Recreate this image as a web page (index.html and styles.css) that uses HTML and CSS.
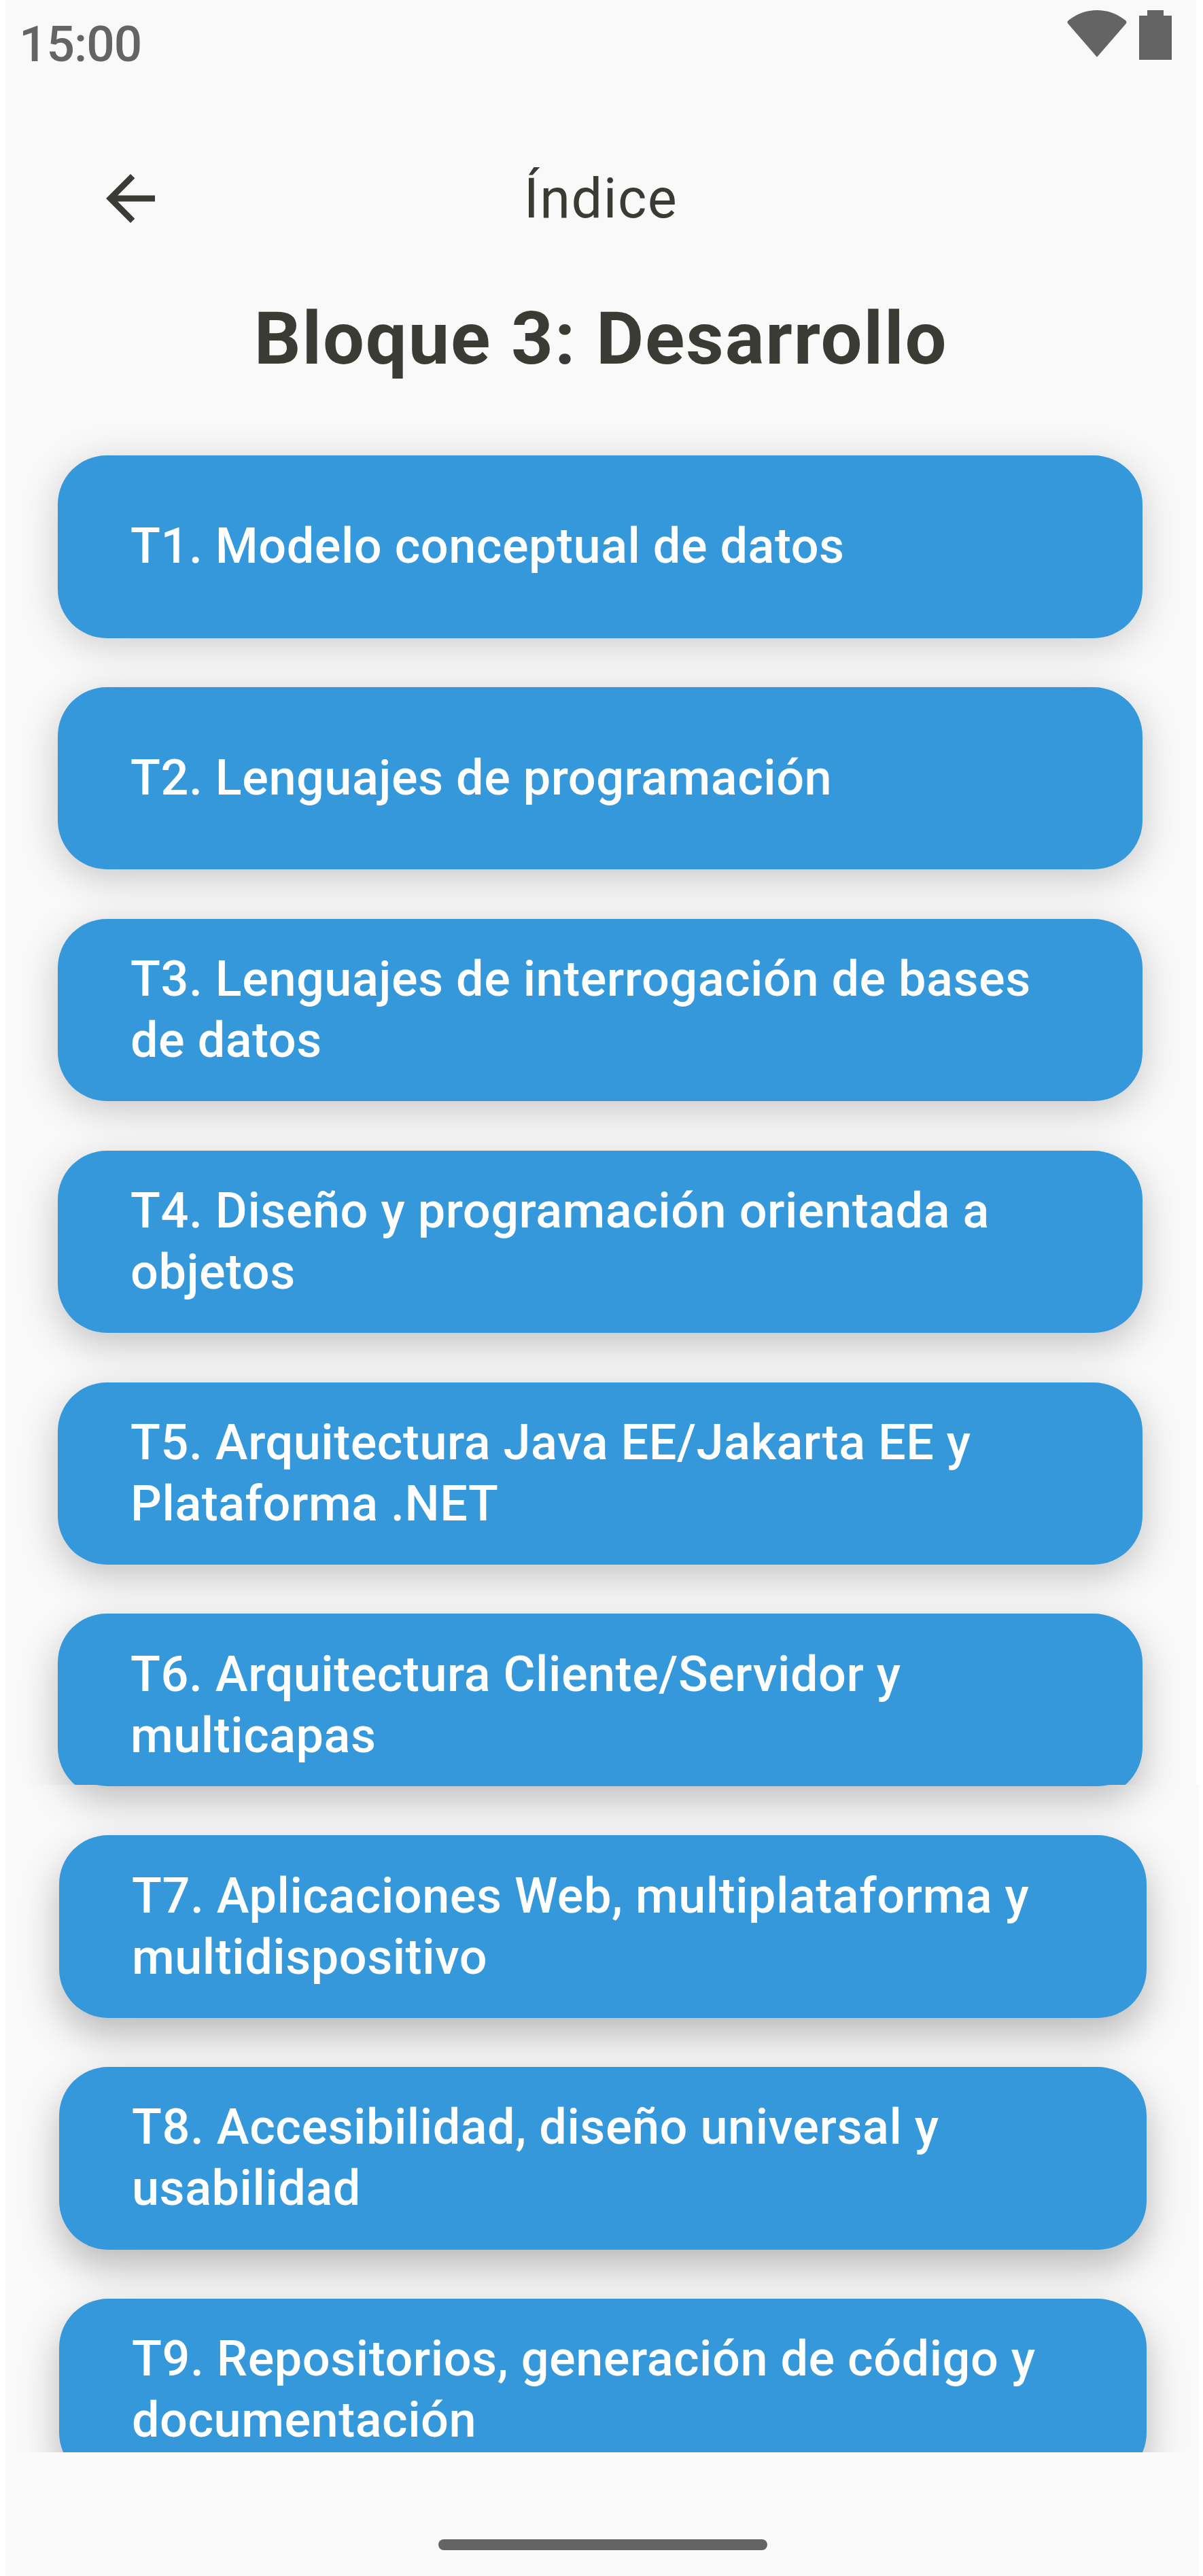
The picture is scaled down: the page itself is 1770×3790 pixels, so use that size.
FILE: index.html
```html
<!DOCTYPE html>
<html lang="es">
<head>
<meta charset="utf-8">
<title>Índice</title>
<link rel="stylesheet" href="styles.css">
</head>
<body>
<div class="screen">
  <section class="pane pane-top">
    <div class="status">
      <span class="clock">15:00</span>
      <span class="indicators">
        <svg class="wifi" viewBox="0 0 88 69"><path d="M44 69L1.500 20Q-.5 17 2 15Q21 0 44 0T86 15Q88.500 17 86.500 20Z" fill="#646464"/></svg>
        <svg class="battery" viewBox="0 0 48 73"><path d="M12 0h24v8h12v65H0V8h12z" fill="#646464"/></svg>
      </span>
    </div>
    <header class="appbar">
      <svg class="back" viewBox="0 0 24 24"><path d="M20 11H7.830l5.590-5.590L12 4l-8 8 8 8 1.410-1.410L7.830 13H20v-2z" fill="#3b3b36"/></svg>
      <span class="appbar-title">Índice</span>
    </header>
    <h1 class="title">Bloque 3: Desarrollo</h1>
    <div class="list">
      <div class="card level-1">T1. Modelo conceptual de datos</div>
      <div class="card level-2">T2. Lenguajes de programación</div>
      <div class="card level-2">T3. Lenguajes de interrogación de bases<br>de datos</div>
      <div class="card level-3">T4. Diseño y programación orientada a<br>objetos</div>
      <div class="card level-3">T5. Arquitectura Java EE/Jakarta EE y<br>Plataforma .NET</div>
      <div class="card level-4">T6. Arquitectura Cliente/Servidor y<br>multicapas</div>
    </div>
  </section>
  <section class="pane pane-bottom">
    <div class="list">
      <div class="card card-tail level-4"></div>
      <div class="card level-5">T7. Aplicaciones Web, multiplataforma y<br>multidispositivo</div>
      <div class="card level-5">T8. Accesibilidad, diseño universal y<br>usabilidad</div>
      <div class="card level-5">T9. Repositorios, generación de código y<br>documentación</div>
    </div>
  </section>
  <footer class="nav"><div class="handle"></div></footer>
</div>
</body>
</html>
```
FILE: styles.css
```css
* { box-sizing: border-box; }

body {
  margin: 0;
  background: #fff;
  font-family: Roboto, "Liberation Sans", sans-serif;
}

.screen {
  width: 1770px;
  height: 3790px;
  padding-left: 8px;
  overflow: hidden;
}

.pane {
  overflow: hidden;
  background: #f9f9f9;
}

.pane-top { width: 1752px; height: 2626px; }
.pane-bottom { width: 1756px; height: 982px; }

.status {
  display: flex;
  justify-content: space-between;
  height: 200px;
  padding: 15px 36px 0 20px;
}

.clock {
  padding-top: 7px;
  font-size: 73px;
  font-weight: 500;
  line-height: 86px;
  letter-spacing: -1px;
  color: #646464;
}

.indicators { display: flex; gap: 18px; }
.wifi { width: 88px; height: 69px; }
.battery { width: 48px; height: 73px; }

.appbar {
  display: grid;
  grid-template-columns: 108px 1fr 108px;
  align-items: center;
  height: 184px;
  padding: 0 130px;
  color: #3b3b36;
}

.back { width: 108px; height: 108px; }

.appbar-title {
  padding-top: 2px;
  font-size: 81px;
  line-height: 96px;
  letter-spacing: 1.5px;
  text-align: center;
}

.title {
  height: 286px;
  margin: 0;
  padding-top: 50px;
  font-size: 108px;
  font-weight: 700;
  line-height: 128px;
  letter-spacing: 1.9px;
  text-align: center;
  color: #3b3b36;
}

.list {
  display: flex;
  flex-direction: column;
  gap: 72.4px;
}

.pane-top .list { padding: 0 79px 0 77px; }
.pane-bottom .list { padding: 0 77px 0 79px; }

.card {
  display: flex;
  flex: none;
  align-items: center;
  height: 268.5px;
  padding: 0 107px;
  border-radius: 72px;
  background: #3598db;
  color: #fff;
  font-size: 72px;
  font-weight: 500;
  line-height: 90px;
  letter-spacing: .54px;
  white-space: nowrap;
}

/* end of the card that continues from the pane above */
.card-tail { margin-top: -266.6px; }

.level-1 { box-shadow: 0 10px 56px rgba(0, 0, 0, .18); }
.level-2 { box-shadow: 0 13px 56px rgba(0, 0, 0, .2); }
.level-3 { box-shadow: 0 17px 56px rgba(0, 0, 0, .22); }
.level-4 { box-shadow: 0 21px 56px rgba(0, 0, 0, .24); }
.level-5 { box-shadow: 0 25px 56px rgba(0, 0, 0, .26); }

.nav {
  display: flex;
  justify-content: center;
  width: 1758px;
  height: 182px;
  padding-top: 128px;
  background: linear-gradient(to right, #f9f9f9 1756px, #fff 1756px);
}

.handle {
  width: 484px;
  height: 16px;
  border-radius: 8px;
  background: #646464;
}
```
